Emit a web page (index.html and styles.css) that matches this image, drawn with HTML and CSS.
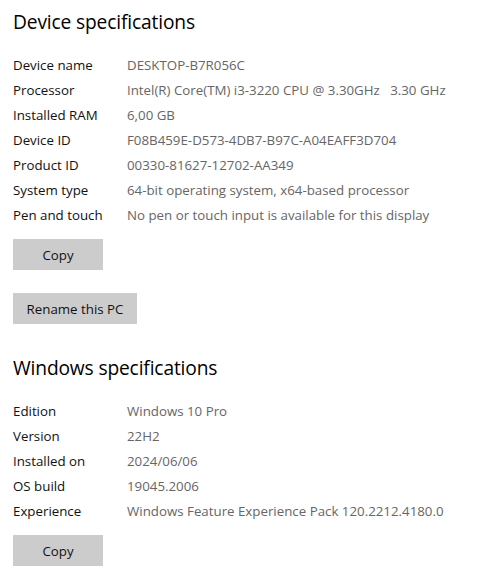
FILE: index.html
```html
<!DOCTYPE html>
<html>
<head>
<title>About</title>
<meta charset="utf-8">
<link rel="stylesheet" href="styles.css">
</head>
<body>

<div class="section">
	<h2>Device specifications</h2>
	<div class="specs">
		<div class="label">Device name</div><div class="value">DESKTOP-B7R056C</div>
		<div class="label">Processor</div><div class="value">Intel(R) Core(TM) i3-3220 CPU @ 3.30GHz&nbsp;&nbsp;&nbsp;3.30 GHz</div>
		<div class="label">Installed RAM</div><div class="value">6,00 GB</div>
		<div class="label">Device ID</div><div class="value">F08B459E-D573-4DB7-B97C-A04EAFF3D704</div>
		<div class="label">Product ID</div><div class="value">00330-81627-12702-AA349</div>
		<div class="label">System type</div><div class="value">64-bit operating system, x64-based processor</div>
		<div class="label">Pen and touch</div><div class="value">No pen or touch input is available for this display</div>
	</div>
	<button type="button" class="btn copy">Copy</button>
	<button type="button" class="btn rename">Rename this PC</button>
</div>

<div class="section">
	<h2>Windows specifications</h2>
	<div class="specs">
		<div class="label">Edition</div><div class="value">Windows 10 Pro</div>
		<div class="label">Version</div><div class="value">22H2</div>
		<div class="label">Installed on</div><div class="value">2024/06/06</div>
		<div class="label">OS build</div><div class="value">19045.2006</div>
		<div class="label">Experience</div><div class="value">Windows Feature Experience Pack 120.2212.4180.0</div>
	</div>
	<button type="button" class="btn copy">Copy</button>
</div>

</body>
</html>
```

FILE: styles.css
```css
body{
	margin: 0;
	padding: 0 13px;
	background: #fff;
	color: #000;
	font-family: "Open Sans", "Noto Sans", sans-serif;
}

.section{
	display: flex;
	flex-direction: column;
	align-items: flex-start;
}

.section + .section{
	margin-top: 22px;
}

h2{
	font-size: 19.2px;
	font-weight: 400;
	line-height: 28px;
	margin: 8px 0 0 0;
	letter-spacing: -0.15px;
}

.specs{
	display: grid;
	grid-template-columns: 114px auto;
	grid-auto-rows: 25px;
	align-items: center;
	margin-top: 16px;
	font-size: 13.3px;
}

.label{
	color: #111;
}

.value{
	color: #666;
	white-space: nowrap;
}

.btn{
	height: 31px;
	margin-top: 12px;
	border: none;
	background-color: #cccccc;
	color: #111;
	font-family: inherit;
	font-size: 13.3px;
	padding: 0;
}

.copy{
	width: 90px;
}

.rename{
	width: 124px;
	margin-top: 23px;
}
```
